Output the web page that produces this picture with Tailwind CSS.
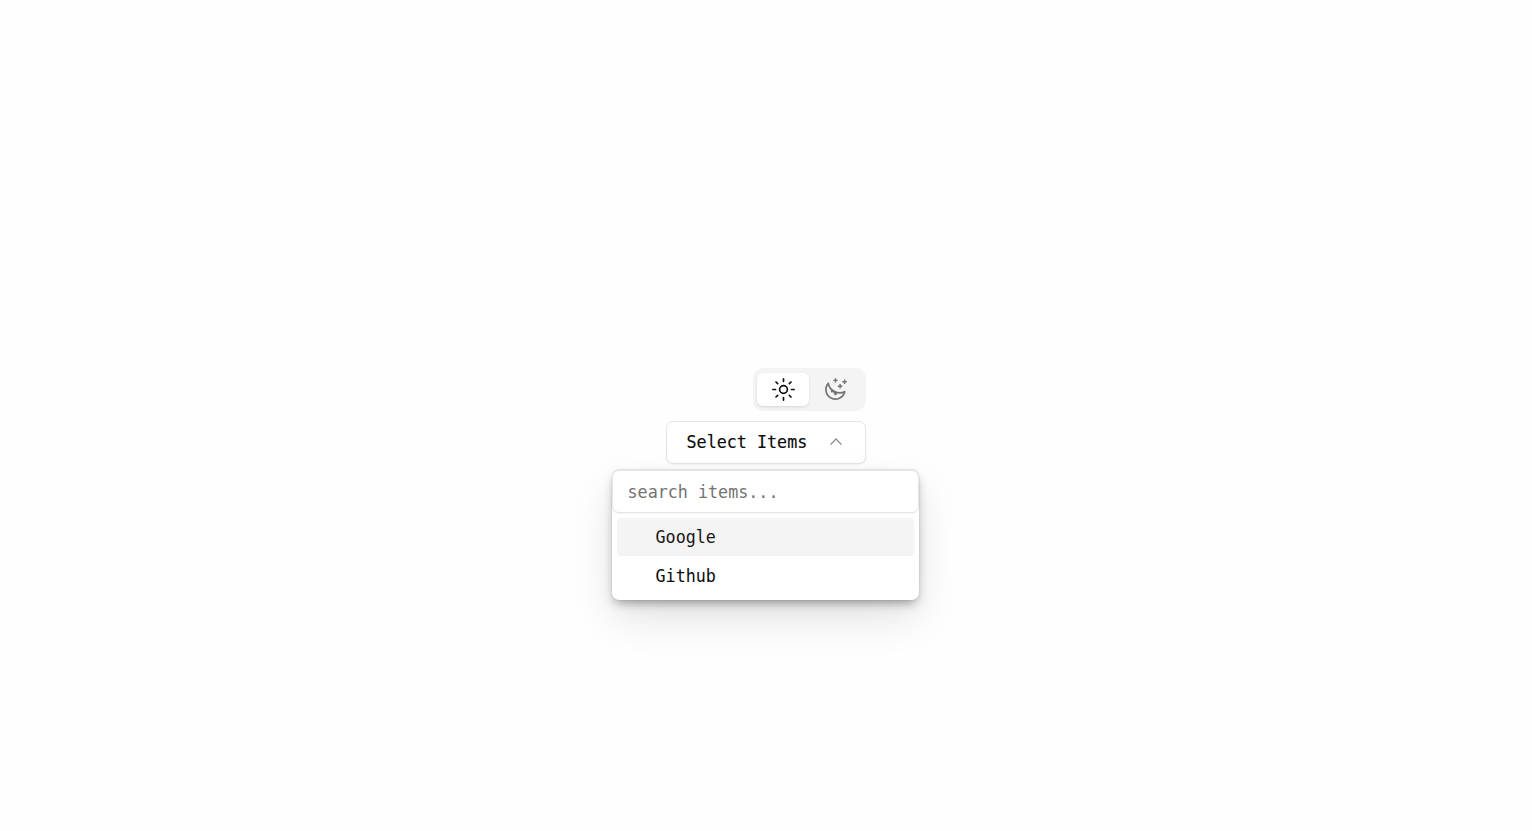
<!DOCTYPE html>
<html lang="en">
<head>
<meta charset="utf-8">
<title>Select Items</title>
<script src="https://cdn.jsdelivr.net/npm/@tailwindcss/browser@4"></script>
</head>
<body class="h-screen overflow-hidden bg-[#fefefe] font-['DejaVu_Sans_Mono',monospace] text-[16.73px] leading-6 text-[#0a0a0a]">
<main class="ml-[612px] flex w-[307px] flex-col items-end pt-[368px]">
  <div class="mr-[53px] flex h-[43px] w-[113px] items-center rounded-[10px] bg-[#f4f4f4] px-1">
    <button class="flex h-[33px] w-[52px] items-center justify-center rounded-md bg-white shadow-sm" aria-label="Light">
      <svg class="size-6" viewBox="0 0.5 24 24" fill="none" stroke="#111" stroke-width="1.7" stroke-linecap="round"><circle cx="12.5" cy="12" r="3.9"/><path d="M12.5 1.4v2.4M12.5 20.2v2.4M1.9 12h2.6M20.5 12h2.6M5 4.5l1.7 1.7M18.3 17.8l1.7 1.7M5 19.5l1.7-1.7M18.3 6.2l1.7-1.7"/></svg>
    </button>
    <button class="flex h-[33px] w-[53px] items-center justify-center" aria-label="Dark">
      <svg class="size-6" viewBox="0.5 0.5 24 24" fill="none" stroke="#737373" stroke-width="1.7" stroke-linejoin="round"><path d="M4.8 5.8A9.5 9.5 0 1 0 21.2 14.2Q16 16.5 11 14Q5.6 11.2 4.8 5.8Z"/><path d="M7 11.5l.8 3.6 2-.3 1.6 3.2 2.5-1.3-.2-1.900-3.300-1.200Z" fill="#737373" stroke="none"/><path stroke-width="1.4" d="M12 .7v4.400M9.800 2.900h4.400M21.100 2v4.400M18.900 4.200h4.400M16.600 6.600v4.400M14.400 8.800h4.400"/></svg>
    </button>
  </div>
  <button class="mt-[10px] mr-[53px] flex h-[43px] w-[200px] items-center justify-between rounded-[7px] border border-[#e5e5e5] bg-white pr-[21.5px] pb-[2px] pl-[19.5px] shadow-xs">
    <span class="scale-y-[1.08] [-webkit-text-stroke:0.15px_#0a0a0a]">Select Items</span>
    <svg class="h-4 w-4" viewBox="0 0 16 16" fill="none" stroke="#858585" stroke-width="1.2" stroke-linecap="round" stroke-linejoin="round"><path d="M2.8 10.300L8 5l5.200 5.300"/></svg>
  </button>
  <section class="mt-[6px] h-[130px] w-[307px] rounded-[7px] bg-white shadow-[0_-1px_0_0_#e2e2e2,0_0_1px_0_#00000040,0_18px_40px_-2px_#00000020,0_5px_11px_-3px_#00000068]">
    <div class="flex h-[43px] w-full items-center rounded-[7px] border border-[#e5e5e5] bg-white px-[14.5px] shadow-xs">
      <input class="w-full scale-y-[1.08] outline-none placeholder:text-[#737373]" placeholder="search items..." aria-label="Search items">
    </div>
    <ul class="px-[5px] pt-[5px]">
      <li class="flex h-[38px] items-center rounded-[4px] bg-[#f4f4f4] pl-[38.5px] text-[#171717]"><span class="scale-y-[1.08]">Google</span></li>
      <li class="mt-px flex h-[38px] items-center rounded-[4px] pl-[38.5px]"><span class="scale-y-[1.08]">Github</span></li>
    </ul>
  </section>
</main>
</body>
</html>
